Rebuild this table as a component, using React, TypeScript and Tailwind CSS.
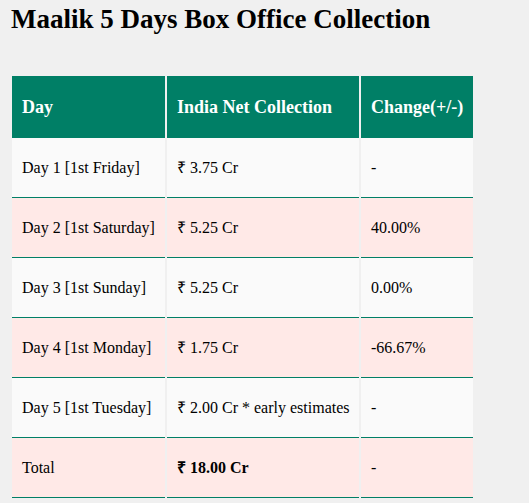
import React from "react";

const rows = [
  { day: "Day 1 [1st Friday]", net: "₹ 3.75 Cr", change: "-", pink: false },
  { day: "Day 2 [1st Saturday]", net: "₹ 5.25 Cr", change: "40.00%", pink: true },
  { day: "Day 3 [1st Sunday]", net: "₹ 5.25 Cr", change: "0.00%", pink: false },
  { day: "Day 4 [1st Monday]", net: "₹ 1.75 Cr", change: "-66.67%", pink: true },
  { day: "Day 5 [1st Tuesday]", net: "₹ 2.00 Cr * early estimates", change: "-", pink: false },
];

export default function App() {
  const cell =
    "h-[60px] px-[10px] whitespace-nowrap border-0 border-b border-solid border-b-[#007f66] align-middle text-left text-[16px] text-black";
  const head = "h-[62px] px-[10px] whitespace-nowrap bg-[#007f66] text-white text-left text-[18px] font-bold";
  return (
    <div className="min-h-[503px] w-full bg-[#f0f0f0] font-['Liberation_Serif',serif] pt-[4px]">
      <h1 className="pl-[11px] text-[27px] leading-[30px] font-bold text-black">
        Maalik 5 Days Box Office Collection
      </h1>
      <div className="pl-[10px] pt-[42px]">
        <table className="table-fixed border-separate border-spacing-x-[2px] border-spacing-y-0 w-[465px]">
          <thead>
            <tr>
              <th className={head + " w-[153px]"}>Day</th>
              <th className={head + " w-[192px]"}>India Net Collection</th>
              <th className={head + " w-[112px]"}>Change(+/-)</th>
            </tr>
          </thead>
          <tbody>
            {rows.map((r) => (
              <tr key={r.day} className={r.pink ? "bg-[#ffe9e7]" : "bg-[#fafafa]"}>
                <td className={cell}>{r.day}</td>
                <td className={cell}>{r.net}</td>
                <td className={cell}>{r.change}</td>
              </tr>
            ))}
            <tr className="bg-[#ffe9e7]">
              <td className={cell}>Total</td>
              <td className={cell + " font-bold"}>₹ 18.00 Cr</td>
              <td className={cell}>-</td>
            </tr>
          </tbody>
        </table>
      </div>
    </div>
  );
}
